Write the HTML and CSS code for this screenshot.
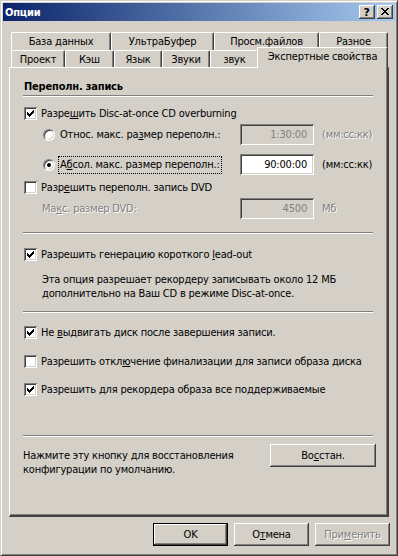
FILE: index.html
```html
<!DOCTYPE html>
<html lang="ru">
<head>
    <meta charset="UTF-8">
    <meta name="viewport" content="width=device-width, initial-scale=1.0">
    <title>Опции</title>
    <link rel="stylesheet" href="styles.css">
</head>
<body>
<div class="window">
    <div class="titlebar">
        <span class="title">Опции</span>
        <div class="caption-buttons">
            <span class="cap-btn help">?</span>
            <span class="cap-btn">
                <svg width="16" height="14" viewBox="0 0 16 14" shape-rendering="crispEdges">
                    <path d="M4 3h2v1H4zM10 3h2v1h-2zM5 4h2v1H5zM9 4h2v1H9zM6 5h4v1H6zM7 6h2v1H7zM6 7h4v1H6zM5 8h2v1H5zM9 8h2v1H9zM4 9h2v1H4zM10 9h2v1h-2z" fill="#000"/>
                </svg>
            </span>
        </div>
    </div>

    <div class="client">
        <div class="tab-row">
            <div class="tab" style="width:100px">База данных</div>
            <div class="tab" style="width:103px">УльтраБуфер</div>
            <div class="tab" style="width:105px">Просм.файлов</div>
            <div class="tab" style="width:69px">Разное</div>
        </div>
        <div class="tab-row front">
            <div class="tab" style="width:54px">Проект</div>
            <div class="tab" style="width:49px">Кэш</div>
            <div class="tab" style="width:48px">Язык</div>
            <div class="tab" style="width:48px">Звуки</div>
            <div class="tab" style="width:49px">звук</div>
            <div class="tab selected" style="width:131px">Экспертные свойства</div>
        </div>

        <div class="panel">
            <div class="heading">Переполн. запись</div>
            <div class="sep"></div>

            <div class="row check-row mt7">
                <span class="check checked"><svg width="13" height="13" viewBox="0 0 13 13" shape-rendering="crispEdges"><path d="M3 5h1v3H3zM4 6h1v3H4zM5 7h1v3H5zM6 6h1v3H6zM7 5h1v3H7zM8 4h1v3H8zM9 3h1v3H9z" fill="#000"/></svg></span>
                <span>Разре<u>ш</u>ить Disc-at-once CD overburning</span>
            </div>

            <div class="row field-row mt2">
                <span class="field-label radio-label">
                    <span class="radio"></span>
                    <span class="focusable">Относ. макс. ра<u>з</u>мер переполн.:</span>
                </span>
                <span class="edit disabled">1:30:00</span>
                <span class="unit disabled-text">(мм:сс:кк)</span>
            </div>

            <div class="row field-row mt9">
                <span class="field-label radio-label">
                    <span class="radio on"></span>
                    <span class="focusable focused">А<u>б</u>сол. макс. размер переполн.:</span>
                </span>
                <span class="edit">90:00:00</span>
                <span class="unit">(мм:сс:кк)</span>
            </div>

            <div class="row check-row mt3">
                <span class="check"></span>
                <span>Разр<u>е</u>шить переполн. запись DVD</span>
            </div>

            <div class="row field-row mt2">
                <span class="field-label indent disabled-text">Ма<u>к</u>с. размер DVD:</span>
                <span class="edit disabled">4500</span>
                <span class="unit disabled-text">Мб</span>
            </div>

            <div class="sep mt13"></div>

            <div class="row check-row mt11">
                <span class="check checked"><svg width="13" height="13" viewBox="0 0 13 13" shape-rendering="crispEdges"><path d="M3 5h1v3H3zM4 6h1v3H4zM5 7h1v3H5zM6 6h1v3H6zM7 5h1v3H7zM8 4h1v3H8zM9 3h1v3H9z" fill="#000"/></svg></span>
                <span>Разрешить генерацию короткого <u>l</u>ead-out</span>
            </div>

            <p class="note indent mt10">Эта опция разрешает рекордеру записывать около 12 МБ<br>дополнительно на Ваш CD в режиме Disc-at-once.</p>

            <div class="sep mt10"></div>

            <div class="row check-row mt10">
                <span class="check checked"><svg width="13" height="13" viewBox="0 0 13 13" shape-rendering="crispEdges"><path d="M3 5h1v3H3zM4 6h1v3H4zM5 7h1v3H5zM6 6h1v3H6zM7 5h1v3H7zM8 4h1v3H8zM9 3h1v3H9z" fill="#000"/></svg></span>
                <span>Не <u>в</u>ыдвигать диск после завершения записи.</span>
            </div>

            <div class="row check-row mt11">
                <span class="check"></span>
                <span>Разрешить откл<u>ю</u>чение финализации для записи образа диска</span>
            </div>

            <div class="row check-row mt10">
                <span class="check checked"><svg width="13" height="13" viewBox="0 0 13 13" shape-rendering="crispEdges"><path d="M3 5h1v3H3zM4 6h1v3H4zM5 7h1v3H5zM6 6h1v3H6zM7 5h1v3H7zM8 4h1v3H8zM9 3h1v3H9z" fill="#000"/></svg></span>
                <span>Разрешить <u>д</u>ля рекордера образа все поддерживаемые</span>
            </div>

            <div class="sep mt37"></div>

            <div class="restore-row mt7">
                <p class="note">Нажмите эту кнопку для восстановления<br>конфигурации по умолчанию.</p>
                <button class="btn restore">Во<u>с</u>стан.</button>
            </div>
        </div>

        <div class="dialog-buttons">
            <button class="btn default">OK</button>
            <button class="btn">О<u>т</u>мена</button>
            <button class="btn disabled-text">При<u>м</u>енить</button>
        </div>
    </div>
</div>
</body>
</html>
```

FILE: styles.css
```css
*{
    box-sizing: border-box;
}
body{
    margin: 0;
    background-color: #d4d0c8;
    font-family: "DejaVu Sans Condensed", "DejaVu Sans", sans-serif;
    font-size: 11px;
    letter-spacing: -0.2px;
    color: #000;
}
u{
    text-underline-offset: 1px;
}
.window{
    width: 398px;
    height: 556px;
    border: 1px solid;
    border-color: #d4d0c8 #404040 #404040 #d4d0c8;
    box-shadow: inset 1px 1px #fff, inset -1px -1px #808080;
    padding: 2px;
    background-color: #d4d0c8;
}
.titlebar{
    height: 18px;
    display: flex;
    align-items: center;
    justify-content: space-between;
    padding: 0 2px 0 2px;
    background: linear-gradient(to right, #0a246a, #a6caf0);
}
.title{
    color: #fff;
    font-weight: bold;
}
.caption-buttons{
    display: flex;
    gap: 2px;
}
.cap-btn{
    width: 16px;
    height: 14px;
    background-color: #d4d0c8;
    box-shadow: inset -1px -1px #404040, inset 1px 1px #fff, inset -2px -2px #808080;
    display: flex;
    align-items: center;
    justify-content: center;
}
.help{
    font-family: "DejaVu Sans", sans-serif;
    font-weight: bold;
    font-size: 11px;
    padding-right: 1px;
}
.client{
    padding: 0 4px 0 6px;
}
.tab-row{
    display: flex;
    padding-left: 2px;
}
.tab-row:first-child{
    margin-top: 11px;
}
.tab{
    height: 18px;
    border: 1px solid #fff;
    border-bottom: none;
    border-right-color: #404040;
    border-radius: 2px 2px 0 0;
    box-shadow: inset -1px 0 #808080;
    display: flex;
    align-items: center;
    justify-content: center;
    white-space: nowrap;
    background-color: #d4d0c8;
}
.front .tab{
    height: 17px;
}
.front .tab.selected{
    height: 21px;
    margin: -3px -2px -1px -2px;
    padding-bottom: 3px;
    position: relative;
    z-index: 1;
}
.panel{
    width: 380px;
    height: 450px;
    border: 1px solid #fff;
    border-right: 2px solid #404040;
    border-bottom: 2px solid #404040;
    box-shadow: inset -1px -1px #808080;
    padding: 12px 14px 0 14px;
}
.heading{
    font-weight: bold;
    height: 14px;
    line-height: 14px;
}
.sep{
    height: 2px;
    margin: 1px 0 0 -1px;
    border-top: 1px solid #808080;
    border-bottom: 1px solid #fff;
}
.row{
    display: flex;
    align-items: center;
    white-space: nowrap;
}
.check-row{
    height: 18px;
}
.check{
    width: 13px;
    height: 13px;
    margin-right: 4px;
    flex: none;
    background-color: #fff;
    box-shadow: inset 1px 1px #808080, inset -1px -1px #fff, inset 2px 2px #404040, inset -2px -2px #d4d0c8;
}
.check svg{
    display: block;
}
.field-row{
    height: 21px;
}
.field-label{
    width: 216px;
    flex: none;
}
.radio-label{
    display: flex;
    align-items: center;
    padding-left: 19px;
}
.radio{
    width: 12px;
    height: 12px;
    margin-right: 3px;
    flex: none;
    border-radius: 50%;
    background-color: #fff;
    border: 1px solid;
    border-color: #808080 #fff #fff #808080;
    box-shadow: inset 1px 1px #404040, inset -1px -1px #d4d0c8;
    display: flex;
    align-items: center;
    justify-content: center;
}
.radio.on::after{
    content: "";
    width: 4px;
    height: 4px;
    border-radius: 50%;
    background-color: #000;
}
.focusable{
    border: 1px dotted transparent;
    padding: 1px 1px 2px 1px;
}
.focused{
    border-color: #000;
}
.indent{
    padding-left: 18px;
}
.edit{
    width: 74px;
    height: 21px;
    flex: none;
    background-color: #fff;
    box-shadow: inset 1px 1px #808080, inset -1px -1px #fff, inset 2px 2px #404040, inset -2px -2px #d4d0c8;
    text-align: right;
    padding: 0 7px 0 4px;
    line-height: 21px;
}
.edit.disabled{
    background-color: #d4d0c8;
    color: #808080;
}
.unit{
    margin-left: 8px;
}
.disabled-text{
    color: #808080;
    text-shadow: 1px 1px #fff;
}
.note{
    margin: 0;
    line-height: 14px;
    white-space: nowrap;
}
.restore-row{
    display: flex;
    justify-content: space-between;
    margin-right: -3px;
    margin-left: -1px;
}
.restore-row .note{
    margin-top: 5px;
}
.btn{
    font: inherit;
    letter-spacing: inherit;
    color: #000;
    width: 75px;
    height: 23px;
    padding: 0;
    border: none;
    background-color: #d4d0c8;
    box-shadow: inset -1px -1px #404040, inset 1px 1px #fff, inset -2px -2px #808080;
}
.btn.restore{
    width: 106px;
}
.btn.default{
    box-shadow: inset 0 0 0 1px #000, inset -2px -2px #404040, inset 2px 2px #fff, inset -3px -3px #808080;
}
.btn.disabled-text{
    color: #808080;
}
.dialog-buttons{
    display: flex;
    justify-content: flex-end;
    gap: 6px;
    margin-top: 6px;
    padding-right: 1px;
}
.mt2{ margin-top: 2px; }
.mt3{ margin-top: 3px; }
.mt7{ margin-top: 7px; }
.mt9{ margin-top: 9px; }
.mt10{ margin-top: 10px; }
.mt11{ margin-top: 11px; }
.mt13{ margin-top: 13px; }
.mt37{ margin-top: 37px; }
```
